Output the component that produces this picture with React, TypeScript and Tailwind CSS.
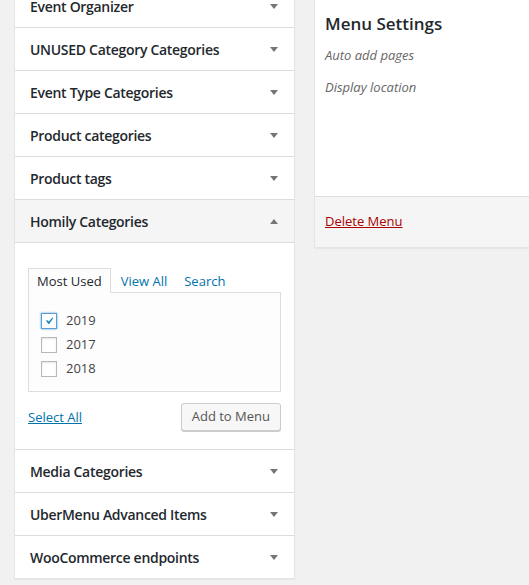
import React, { useState } from "react";

const font = { fontFamily: '"Open Sans", "Noto Sans", "Liberation Sans", sans-serif' };

const Arrow = ({ up }: { up?: boolean }) => (
    <span
        className={`w-0 h-0 border-l-[4px] border-r-[4px] border-l-transparent border-r-transparent ${up ? "border-b-[5px] border-b-[#72777c]" : "border-t-[5px] border-t-[#72777c]"}`}
    />
);

const Row = ({ title }: { title: string }) => (
    <div className="h-[43px] border-b border-[#dddddd] flex items-center justify-between pl-[15px] pr-[16px] bg-white">
        <span className="text-[14px] font-semibold text-[#23282d] tracking-[-0.3px]">{title}</span>
        <Arrow />
    </div>
);

const Check = ({ label, checked }: { label: string; checked?: boolean }) => (
    <label className="flex items-center gap-[9px] h-[24px]">
        <span
            className={`w-[16px] h-[16px] border flex items-center justify-center bg-white ${checked ? "border-[#5b9dd9] shadow-[0_0_2px_rgba(30,140,190,0.8)]" : "border-[#b4b9be] shadow-[inset_0_1px_2px_rgba(0,0,0,0.1)]"}`}
        >
            {checked && (
                <svg width="18" height="18" viewBox="0 0 20 20" className="-mt-[1px]">
                    <path d="M14.83 4.89l1.34.94-5.81 8.38H9.02L5.78 9.67l1.34-1.25 2.57 2.4z" fill="#1e8cbe" />
                </svg>
            )}
        </span>
        <span className="text-[13px] text-[#444]">{label}</span>
    </label>
);

export default function App() {
    const [tab] = useState("most");
    return (
        <div className="h-[585px] bg-[#f1f1f1] flex items-start gap-[19px] pl-[14px] overflow-hidden" style={font}>
            <div className="w-[281px] shrink-0 -mt-[16px] bg-white border border-[#e5e5e5] shadow-[0_1px_1px_rgba(0,0,0,0.04)]">
                <Row title="Event Organizer" />
                <Row title="UNUSED Category Categories" />
                <Row title="Event Type Categories" />
                <Row title="Product categories" />
                <Row title="Product tags" />
                <div className="h-[43px] border-b border-[#dddddd] flex items-center justify-between pl-[15px] pr-[16px] bg-[#f5f5f5]">
                    <span className="text-[14px] font-semibold text-[#23282d] tracking-[-0.3px]">Homily Categories</span>
                    <Arrow up />
                </div>
                <div className="pt-[26px] pl-[13px] pr-[13px] pb-[18px] border-b border-[#dddddd]">
                    <div className="flex items-end text-[13px] h-[24px]">
                        <span className={`h-[25px] px-[8px] pt-[2px] flex items-center border border-b-0 border-[#dddddd] bg-[#fdfdfd] text-[#23282d] relative z-10 ${tab === "most" ? "" : ""}`}>Most Used</span>
                        <a className="pl-[10px] pr-[17px] h-[24px] pt-[2px] flex items-center text-[#0073aa]">View All</a>
                        <a className="h-[24px] pt-[2px] flex items-center text-[#0073aa]">Search</a>
                    </div>
                    <div className="border border-[#dddddd] bg-[#fdfdfd] h-[100px] pt-[16px] pl-[12px] -mt-px">
                        <Check label="2019" checked />
                        <Check label="2017" />
                        <Check label="2018" />
                    </div>
                    <div className="flex items-center justify-between mt-[11px]">
                        <a className="text-[13px] text-[#0073aa] underline pt-[2px]">Select All</a>
                        <button className="h-[28px] px-[10px] text-[13px] text-[#555] bg-[#f7f7f7] border border-[#cccccc] rounded-[3px] shadow-[0_1px_0_#cccccc]">Add to Menu</button>
                    </div>
                </div>
                <Row title="Media Categories" />
                <Row title="UberMenu Advanced Items" />
                <div className="h-[42px] flex items-center justify-between pl-[15px] pr-[16px] bg-white">
                    <span className="text-[14px] font-semibold text-[#23282d] tracking-[-0.3px]">WooCommerce endpoints</span>
                    <Arrow />
                </div>
            </div>
            <div className="w-[240px] shrink-0 bg-white border-l border-b border-[#e5e5e5] shadow-[0_1px_1px_rgba(0,0,0,0.04)]">
                <div className="h-[196px] pl-[10px] pt-[12px]">
                    <h3 className="text-[17px] font-semibold text-[#23282d] leading-[24px]">Menu Settings</h3>
                    <p className="text-[13px] italic text-[#666] mt-[10px] leading-[18px]">Auto add pages</p>
                    <p className="text-[13px] italic text-[#666] mt-[14px] leading-[18px]">Display location</p>
                </div>
                <div className="h-[51px] bg-[#f5f5f5] border-t border-[#dddddd] flex items-center pl-[10px]">
                    <a className="text-[13px] text-[#a00] underline">Delete Menu</a>
                </div>
            </div>
        </div>
    );
}
